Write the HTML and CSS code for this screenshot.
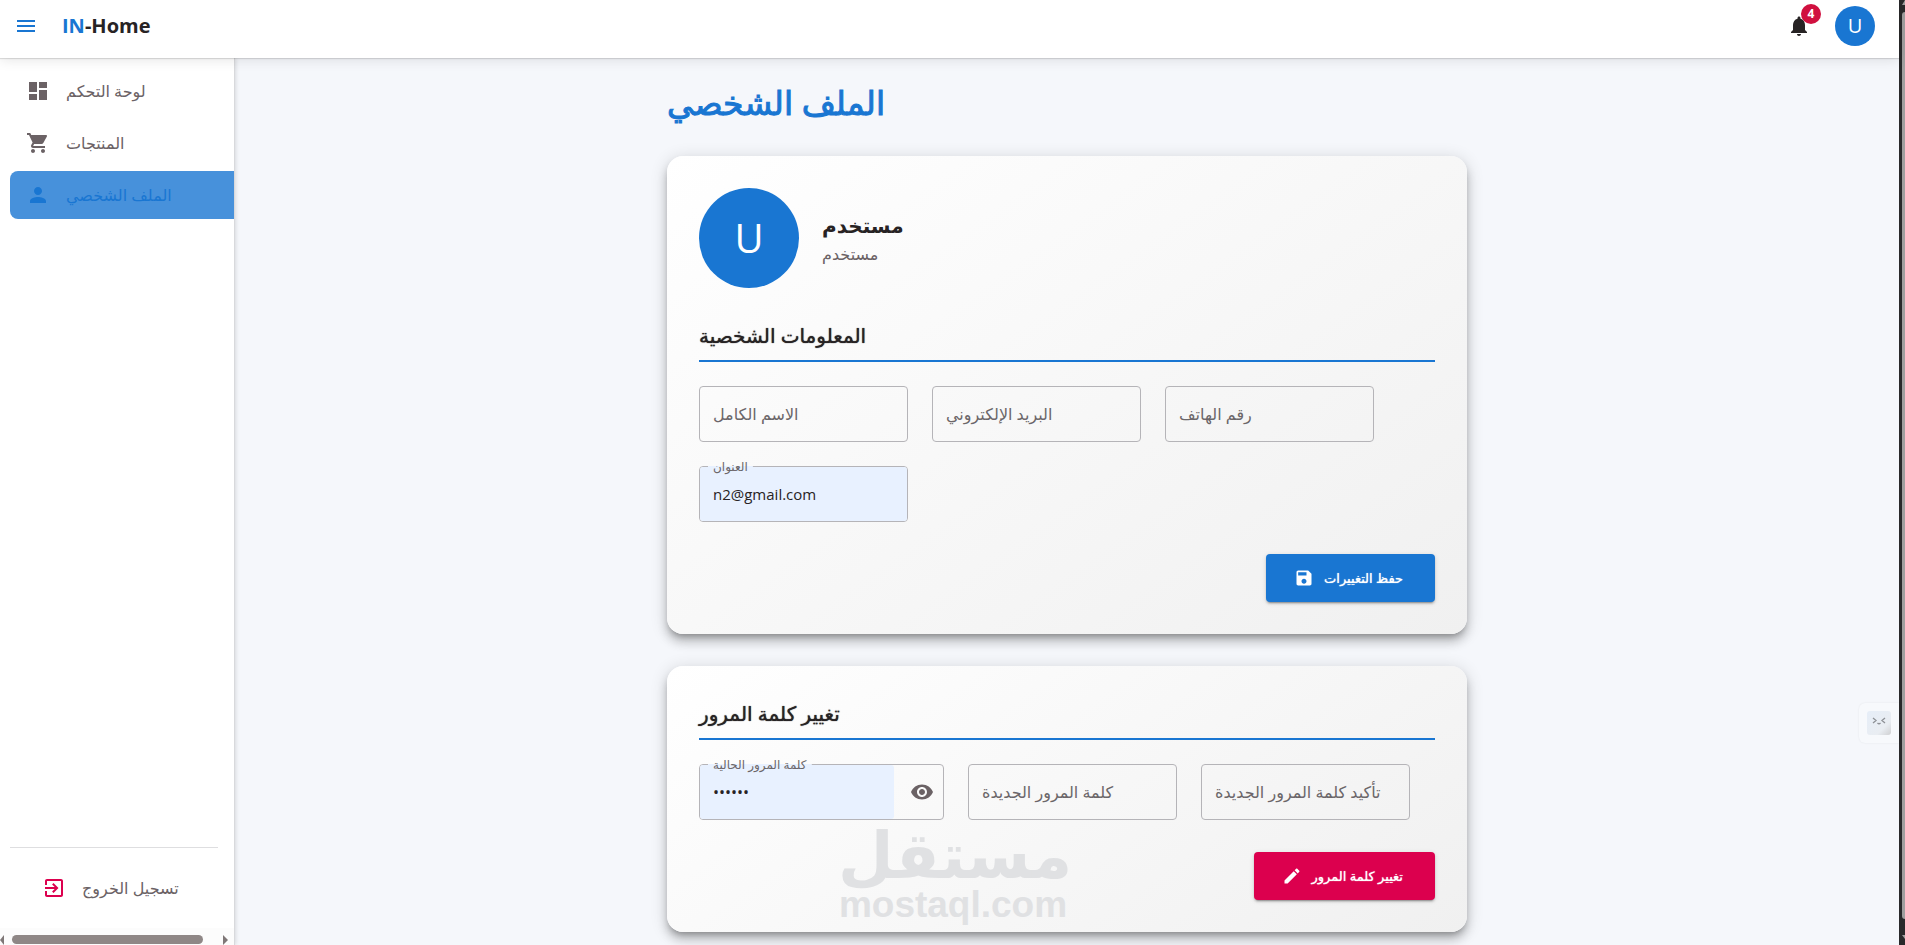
FILE: index.html
```html
<!DOCTYPE html>
<html lang="ar" dir="ltr">
<head>
    <meta charset="UTF-8">
    <meta name="viewport" content="width=device-width, initial-scale=1.0">
    <title>IN-Home</title>
    <link rel="stylesheet" href="styles.css">
</head>
<body>
    <div class="app">
        <header class="topbar">
            <button class="icon-btn menu-btn" aria-label="القائمة">
                <svg viewBox="0 0 24 24"><path d="M3 18h18v-2H3v2zm0-5h18v-2H3v2zm0-7v2h18V6H3z"/></svg>
            </button>
            <a class="brand" href="#"><span>IN</span>-Home</a>
            <button class="icon-btn bell-btn" aria-label="الإشعارات">
                <svg viewBox="0 0 24 24"><path d="M12 22c1.100 0 2-.9 2-2h-4c0 1.100.89 2 2 2zm6-6v-5c0-3.070-1.640-5.640-4.500-6.320V4c0-.83-.67-1.500-1.500-1.500s-1.500.67-1.500 1.500v.68C7.630 5.360 6 7.920 6 11v5l-2 2v1h16v-1l-2-2z"/></svg>
                <span class="badge">4</span>
            </button>
            <button class="avatar">U</button>
        </header>

        <div class="layout">
            <aside class="sidebar">
                <nav class="nav">
                    <a class="nav-item" href="#">
                        <svg viewBox="0 0 24 24"><path d="M3 13h8V3H3v10zm0 8h8v-6H3v6zm10 0h8V11h-8v10zm0-18v6h8V3h-8z"/></svg>
                        <span>لوحة التحكم</span>
                    </a>
                    <a class="nav-item" href="#">
                        <svg viewBox="0 0 24 24"><path d="M7 18c-1.100 0-1.990.9-1.990 2S5.900 22 7 22s2-.9 2-2-.9-2-2-2zM1 2v2h2l3.600 7.590-1.350 2.450c-.16.280-.25.610-.25.960 0 1.100.9 2 2 2h12v-2H7.420c-.14 0-.25-.11-.25-.25l.03-.12.900-1.630h7.450c.75 0 1.410-.41 1.750-1.030l3.580-6.490c.08-.14.120-.31.120-.48 0-.55-.45-1-1-1H5.210l-.94-2H1zm16 16c-1.100 0-1.990.9-1.990 2s.89 2 1.990 2 2-.9 2-2-.9-2-2-2z"/></svg>
                        <span>المنتجات</span>
                    </a>
                    <a class="nav-item active" href="#">
                        <svg viewBox="0 0 24 24"><path d="M12 12c2.210 0 4-1.790 4-4s-1.790-4-4-4-4 1.790-4 4 1.790 4 4 4zm0 2c-2.670 0-8 1.340-8 4v2h16v-2c0-2.660-5.330-4-8-4z"/></svg>
                        <span>الملف الشخصي</span>
                    </a>
                </nav>
                <div class="logout">
                    <button class="nav-item logout-btn">
                        <svg viewBox="0 0 24 24"><path d="M10.090 15.590L11.500 17l5-5-5-5-1.410 1.410L12.670 11H3v2h9.670l-2.580 2.590zM19 3H5c-1.110 0-2 .9-2 2v4h2V5h14v14H5v-4H3v4c0 1.100.89 2 2 2h14c1.100 0 2-.9 2-2V5c0-1.100-.9-2-2-2z"/></svg>
                        <span>تسجيل الخروج</span>
                    </button>
                </div>
                <div class="hscroll">
                    <i class="arrow-left"></i>
                    <div class="hscroll-thumb"></div>
                    <i class="arrow-right"></i>
                </div>
            </aside>

            <main class="content">
                <div class="container">
                    <h1>الملف الشخصي</h1>

                    <section class="card">
                        <div class="profile">
                            <div class="avatar avatar-lg">U</div>
                            <div>
                                <div class="profile-name">مستخدم</div>
                                <div class="profile-role">مستخدم</div>
                            </div>
                        </div>
                        <h2>المعلومات الشخصية</h2>
                        <div class="fields">
                            <div class="field">
                                <input type="text" id="name">
                                <label for="name">الاسم الكامل</label>
                            </div>
                            <div class="field">
                                <input type="email" id="email">
                                <label for="email">البريد الإلكتروني</label>
                            </div>
                            <div class="field">
                                <input type="tel" id="phone">
                                <label for="phone">رقم الهاتف</label>
                            </div>
                            <div class="field filled">
                                <input type="text" id="address" value="n2@gmail.com">
                                <label for="address">العنوان</label>
                            </div>
                        </div>
                        <div class="actions">
                            <button class="btn">
                                <svg viewBox="0 0 24 24"><path d="M17 3H5c-1.110 0-2 .9-2 2v14c0 1.100.89 2 2 2h14c1.100 0 2-.9 2-2V7l-4-4zm-5 16c-1.660 0-3-1.340-3-3s1.340-3 3-3 3 1.340 3 3-1.340 3-3 3zm3-10H5V5h10v4z"/></svg>
                                حفظ التغييرات
                            </button>
                        </div>
                    </section>

                    <section class="card">
                        <h2>تغيير كلمة المرور</h2>
                        <div class="fields">
                            <div class="field filled with-icon">
                                <input type="password" id="current" value="123456">
                                <label for="current">كلمة المرور الحالية</label>
                                <button class="icon-btn eye-btn" aria-label="إظهار">
                                    <svg viewBox="0 0 24 24"><path d="M12 4.500C7 4.500 2.730 7.610 1 12c1.730 4.390 6 7.500 11 7.500s9.270-3.110 11-7.500c-1.730-4.390-6-7.500-11-7.500zM12 17c-2.760 0-5-2.240-5-5s2.240-5 5-5 5 2.240 5 5-2.240 5-5 5zm0-8c-1.660 0-3 1.340-3 3s1.340 3 3 3 3-1.340 3-3-1.340-3-3-3z"/></svg>
                                </button>
                            </div>
                            <div class="field">
                                <input type="password" id="new">
                                <label for="new">كلمة المرور الجديدة</label>
                            </div>
                            <div class="field">
                                <input type="password" id="confirm">
                                <label for="confirm">تأكيد كلمة المرور الجديدة</label>
                            </div>
                        </div>
                        <div class="actions">
                            <button class="btn btn-danger">
                                <svg viewBox="0 0 24 24"><path d="M3 17.250V21h3.750L17.810 9.940l-3.750-3.750L3 17.250zM20.710 7.040c.39-.39.39-1.020 0-1.410l-2.340-2.340c-.39-.39-1.020-.39-1.410 0l-1.830 1.830 3.750 3.750 1.830-1.830z"/></svg>
                                تغيير كلمة المرور
                            </button>
                        </div>
                    </section>
                </div>
            </main>
        </div>
    </div>

    <div class="vscroll">
        <i class="arrow-up"></i>
        <div class="vscroll-thumb"></div>
        <i class="arrow-down"></i>
    </div>

    <div class="watermark">
        <div class="watermark-ar">مستقل</div>
        <div class="watermark-en">mostaql.com</div>
    </div>

    <div class="helper">
        <svg viewBox="0 0 24 24">
            <defs>
                <linearGradient id="face" x1="0" y1="0" x2="1" y2="1">
                    <stop offset="0" stop-color="#e6eef8"/>
                    <stop offset=".7" stop-color="#e9edf2"/>
                    <stop offset="1" stop-color="#cfd0d2"/>
                </linearGradient>
            </defs>
            <rect width="24" height="24" rx="3" fill="url(#face)"/>
            <path d="M6 7l3 2.500-3 2.500M18 7l-3 2.500 3 2.500M10.500 12q1.500 1.500 3 0" fill="none" stroke="#8e9196" stroke-width="1.300"/>
        </svg>
    </div>
</body>
</html>
```

FILE: styles.css
```css
* {
    box-sizing: border-box;
}
body {
    margin: 0;
    height: 100vh;
    display: flex;
    overflow: hidden;
    background: #f5f7fb;
    color: #272324;
    font-family: "Open Sans", "DejaVu Sans", sans-serif;
    font-size: 16px;
    line-height: 24px;
}
button, input {
    font: inherit;
    color: inherit;
    margin: 0;
}
button {
    border: none;
    background: none;
    padding: 0;
    cursor: pointer;
}
a {
    color: inherit;
    text-decoration: none;
}
svg {
    width: 24px;
    height: 24px;
    fill: currentColor;
    display: block;
    flex-shrink: 0;
}
.app {
    flex: 1;
    display: flex;
    flex-direction: column;
    min-width: 0;
}

/* top bar */
.topbar {
    display: flex;
    align-items: center;
    height: 58px;
    padding: 0 24px 6px 14px;
    background: #fff;
    box-shadow: 0 1px 1px rgba(0, 0, 0, 0.12), 0 2px 12px rgba(0, 0, 0, 0.1);
    position: relative;
    z-index: 2;
}
.menu-btn {
    color: #1976d2;
}
.brand {
    margin-left: 24px;
    margin-right: auto;
    font-size: 20px;
    font-weight: 700;
}
.brand span {
    color: #1976d2;
}
.bell-btn {
    position: relative;
    margin-right: 24px;
}
.badge {
    position: absolute;
    top: -10px;
    right: -10px;
    width: 20px;
    height: 20px;
    border-radius: 50%;
    background: #d0103f;
    color: #fff;
    font-size: 12px;
    font-weight: 700;
    line-height: 20px;
    text-align: center;
}
.avatar {
    display: flex;
    align-items: center;
    justify-content: center;
    width: 40px;
    height: 40px;
    border-radius: 50%;
    background: #1976d2;
    color: #fff;
    font-size: 20px;
}
.avatar-lg {
    width: 100px;
    height: 100px;
    font-size: 40px;
}

/* side menu */
.layout {
    flex: 1;
    display: flex;
    min-height: 0;
}
.sidebar {
    display: flex;
    flex-direction: column;
    width: 235px;
    background: #fff;
    border-right: 1px solid #d8d9dc;
    box-shadow: 1px 0 4px rgba(0, 0, 0, 0.12);
}
.nav {
    flex: 1;
    display: flex;
    flex-direction: column;
    gap: 4px;
    padding: 9px 0 0 10px;
}
.nav-item {
    display: flex;
    align-items: center;
    gap: 16px;
    height: 48px;
    padding-left: 16px;
    border-radius: 8px 0 0 8px;
    color: #6b6265;
}
.nav-item.active {
    background: #4791db;
    color: #1976d2;
}
.logout {
    margin: 0 16px 0 10px;
    padding: 16px;
    border-top: 1px solid #dedee0;
}
.logout-btn svg {
    color: #dc004e;
}
.hscroll {
    display: flex;
    align-items: center;
    height: 17px;
    padding: 6px 6px 0 0;
    background: #fcfcfc;
}
.hscroll-thumb {
    width: 191px;
    height: 9px;
    margin: 0 20px 0 8px;
    border-radius: 5px;
    background: #8f8786;
}
.arrow-left, .arrow-right {
    border: 5px solid transparent;
    border-width: 5px 0;
}
.arrow-left {
    border-right: 4px solid #7f7777;
}
.arrow-right {
    border-left: 5px solid #7f7777;
}

/* content */
.content {
    flex: 1;
    overflow: hidden;
}
.container {
    max-width: 800px;
    margin: 0 auto;
    padding-top: 24px;
}
h1 {
    margin: 0 0 32px;
    font-size: 33px;
    font-weight: 500;
    line-height: 42px;
    color: #1976d2;
    -webkit-text-stroke: 1px #1976d2;
}
.card {
    margin-bottom: 32px;
    padding: 32px;
    border-radius: 16px;
    background: linear-gradient(145deg, #fff, #f0f0f0);
    box-shadow: 0 5px 6px -3px rgba(0, 0, 0, 0.3), 0 8px 10px 1px rgba(0, 0, 0, 0.14), 0 3px 16px 2px rgba(0, 0, 0, 0.12);
}
.profile {
    display: flex;
    align-items: center;
    gap: 23px;
    margin-bottom: 32px;
}
.profile-name {
    font-size: 20px;
    font-weight: 700;
    line-height: 32px;
}
.profile-role {
    font-size: 16px;
    color: #6b6265;
}
h2 {
    margin: 0 0 24px;
    padding-bottom: 8px;
    border-bottom: 2px solid #1976d2;
    font-size: 20px;
    font-weight: 500;
    line-height: 32px;
    text-shadow: 0 0 1px currentColor;
}
.fields {
    display: flex;
    flex-wrap: wrap;
    gap: 24px;
}
.field {
    position: relative;
    display: flex;
    width: 209px;
    height: 56px;
    border: 1px solid #b5b4b8;
    border-radius: 4px;
}
.field input {
    flex: 1;
    min-width: 0;
    padding: 0 13px;
    border: none;
    border-radius: 3px;
    outline: none;
    background: transparent;
    font-size: 15px;
}
.field input[type="password"] {
    font-size: 16px;
}
.field label {
    position: absolute;
    top: 15px;
    left: 13px;
    color: #6b6669;
    white-space: nowrap;
}
.field.filled input {
    background: #e8f1ff;
}
.field.filled label {
    top: -9px;
    left: 8px;
    padding: 0 5px;
    font-size: 12px;
    line-height: 17px;
    background: linear-gradient(#e8f1ff, #e8f1ff) center / 100% 1px no-repeat;
}
.field.with-icon {
    width: 245px;
}
.eye-btn {
    width: 49px;
    padding-left: 16px;
    color: #6b6265;
}
.actions {
    display: flex;
    justify-content: flex-end;
    margin-top: 32px;
}
.btn {
    display: flex;
    align-items: center;
    gap: 10px;
    height: 48px;
    padding: 0 32px 0 28px;
    border-radius: 4px;
    background: #1976d2;
    color: #fff;
    font-size: 13px;
    text-shadow: 0 0 1px #fff;
    box-shadow: 0 3px 1px -2px rgba(0, 0, 0, 0.2), 0 2px 2px rgba(0, 0, 0, 0.14), 0 1px 5px rgba(0, 0, 0, 0.12);
}
.btn svg {
    width: 20px;
    height: 20px;
}
.btn-danger {
    background: #dc004e;
}

/* page scrollbar */
.vscroll {
    display: flex;
    flex-direction: column;
    width: 6px;
    padding-left: 3px;
    background: #29292b;
}
.vscroll-thumb {
    flex: 1;
    margin: 7px 0 16px;
    border-radius: 3px 0 0 3px;
    background: #9f9f9f;
}
.arrow-up {
    border-left: 3px solid transparent;
    border-bottom: 5px solid #9f9f9f;
}
.arrow-down {
    margin-bottom: 6px;
    border-left: 3px solid transparent;
    border-top: 4px solid #9f9f9f;
}

/* overlays */
.watermark {
    position: absolute;
    left: 838px;
    bottom: 20px;
    width: 230px;
    color: #e0e1e3;
    font-weight: 700;
    text-align: center;
    pointer-events: none;
}
.watermark-ar {
    font-size: 64px;
    line-height: 62px;
}
.watermark-en {
    font-family: "Liberation Sans", sans-serif;
    font-size: 37px;
    line-height: 40px;
}
.helper {
    position: absolute;
    top: 703px;
    right: 6px;
    padding: 8px;
    border-radius: 6px 0 0 6px;
    background: #f7f9fc;
    box-shadow: 0 0 2px rgba(0, 0, 0, 0.08);
}
```
